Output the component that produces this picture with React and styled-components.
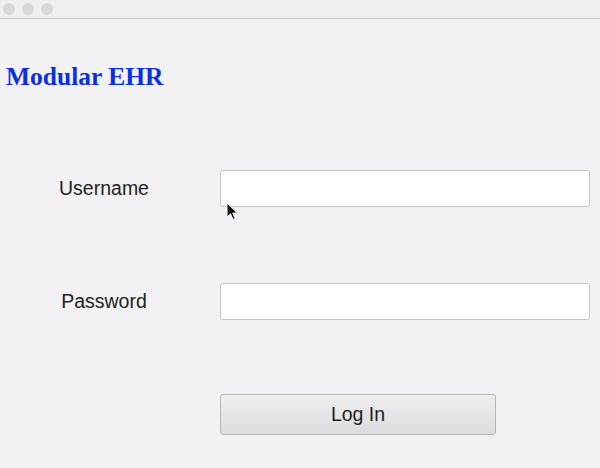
import React from "react";
import styled, { createGlobalStyle } from "styled-components";

const Global = createGlobalStyle`
  html, body { margin: 0; padding: 0; background: #f2f1f3; }
  #root { width: 600px; height: 468px; overflow: hidden; }
`;

function App() {
  return (
    <Window>
      <Global />
      <TitleBar>
        <Dot />
        <Dot />
        <Dot />
      </TitleBar>
      <Heading>Modular EHR</Heading>
      <Form>
        <Row>
          <Label>Username</Label>
          <Field type="text" />
        </Row>
        <Row>
          <Label>Password</Label>
          <Field type="password" />
        </Row>
        <Row>
          <span />
          <Button>Log In</Button>
        </Row>
      </Form>
      <Cursor width="14" height="20" viewBox="0 0 14 20">
        <path d="M1 1 L1 15 L4.5 11.8 L7 17.5 L9.2 16.6 L6.8 11 L11.5 11 Z" fill="#111" stroke="#fff" strokeWidth="1" />
      </Cursor>
    </Window>
  );
}

export default App;

const Window = styled.div`
  position: relative;
  width: 600px;
  height: 468px;
  background: #f2f1f3;
  font-family: "Liberation Sans", Arial, sans-serif;
`;

const TitleBar = styled.div`
  height: 19px;
  box-sizing: border-box;
  border-bottom: 1px solid #c9c8ca;
  display: flex;
  align-items: center;
  gap: 7px;
  padding: 0 0 1px 3px;
  background: #f0eff1;
`;

const Dot = styled.div`
  width: 12px;
  height: 12px;
  border-radius: 50%;
  background: #d7d6d8;
`;

const Heading = styled.h1`
  margin: 43px 0 0 6px;
  font-family: "Liberation Serif", "Times New Roman", serif;
  font-weight: bold;
  font-size: 25.5px;
  line-height: 30px;
  color: #0b2fe2;
`;

const Form = styled.div`
  display: flex;
  flex-direction: column;
  gap: 76px;
  margin-top: 78px;
`;

const Row = styled.div`
  display: grid;
  grid-template-columns: 208px 370px;
  column-gap: 12px;
  align-items: center;
`;

const Label = styled.label`
  text-align: center;
  font-size: 19.5px;
  color: #222;
`;

const Field = styled.input`
  box-sizing: border-box;
  height: 37px;
  width: 370px;
  border: 1px solid #c4c3c5;
  border-radius: 3px;
  background: #fff;
  outline: none;
`;

const Button = styled.button`
  box-sizing: border-box;
  width: 276px;
  height: 41px;
  border: 1px solid #b5b4b6;
  border-radius: 3px;
  background: linear-gradient(180deg, #efeeef 0%, #dcdbdd 100%);
  font-family: "Liberation Sans", Arial, sans-serif;
  font-size: 19.5px;
  color: #1e1e1e;
  margin-top: -2px;
`;

const Cursor = styled.svg`
  position: absolute;
  left: 226px;
  top: 202px;
`;
